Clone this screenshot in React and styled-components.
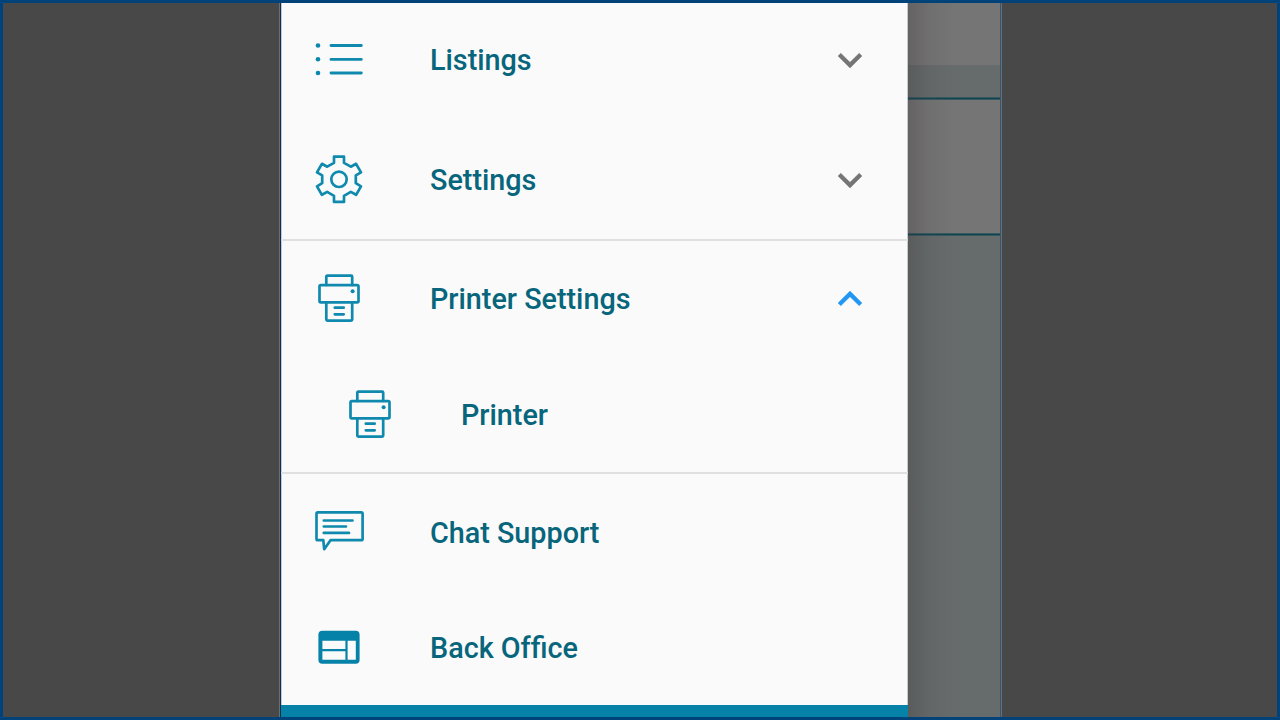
import React from "react";
import styled, { createGlobalStyle } from "styled-components";

const GlobalStyle = createGlobalStyle`
  * { box-sizing: border-box; }
  body { margin: 0; background: #484848; font-family: Roboto, "Liberation Sans", sans-serif; }
`;

const Frame = styled.div`
  display: flex;
  width: 1280px;
  height: 720px;
  border: 3px solid #00427a;
  background: #484848;
  overflow: hidden;
`;

const Screen = styled.main`
  display: flex;
  width: 723px;
  height: 714px;
  margin-left: 276px;
  border-left: 1px solid #6b6f72;
  border-right: 1px solid #6d6d6d;
`;

const ScreenEdge = styled.div`
  flex: none;
  width: 1px;
  background: ${(p) => p.$color};
`;

const Drawer = styled.nav`
  display: flex;
  flex-direction: column;
  flex: none;
  width: 627px;
  height: 714px;
  background: #fafafa;
  overflow: hidden;
`;

const Section = styled.div`
  flex: none;
  border: 0 solid #c3c9ce;
  border-width: 0 1px;
`;

const Divider = styled.div`
  flex: none;
  height: 2px;
  background: #e0e0e0;
`;

const Row = styled.div`
  display: flex;
  align-items: center;
  height: ${(p) => p.$height}px;
  padding: 0 33px 0 ${(p) => (p.$nested ? 64 : 33)}px;
  margin-top: ${(p) => p.$offset || 0}px;
`;

const Label = styled.span`
  flex: 1;
  margin-left: 67px;
  color: #07657c;
  font-size: 28.75px;
  font-weight: 500;
  line-height: 34px;
  white-space: nowrap;
`;

/* Keeps the first f out of the ffi ligature. */
const Unjoined = styled.span`
  display: inline-block;
`;

const LineIcon = styled.svg`
  flex: none;
  width: 48px;
  height: 48px;
  fill: none;
  stroke: #0f8aae;
  stroke-width: 2.7;
  stroke-linecap: round;
  stroke-linejoin: round;
  overflow: visible;
`;

const ChevronIcon = styled.svg`
  flex: none;
  width: 48px;
  height: 48px;
  fill: ${(p) => (p.$open ? "#2196f3" : "#757575")};
  stroke: ${(p) => (p.$open ? "#2196f3" : "#757575")};
  stroke-width: 0.2;
  stroke-linejoin: round;
  transform: ${(p) => (p.$open ? "rotate(180deg)" : "none")};
`;

const Footer = styled.div`
  flex: 1;
  background: #0682a8;
`;

const Backdrop = styled.div`
  display: flex;
  flex-direction: column;
  flex: 1;
  background: #666b6b;
  position: relative;

  &::after {
    content: "";
    position: absolute;
    inset: 0 auto 0 0;
    width: 46px;
    background: linear-gradient(to right, rgba(60, 56, 54, 0.3), rgba(80, 70, 74, 0.13) 45%, rgba(100, 100, 100, 0));
  }
`;

const Panel = styled.div`
  height: ${(p) => p.$height}px;
  background: ${(p) => (p.$gap ? "#666b6b" : "#757575")};
`;

const Rule = styled.div`
  height: 3px;
  background: linear-gradient(#365960 0 33.3%, #0f4350 33.3% 66.6%, #365960 66.6%);
`;

const ListIcon = () => (
  <LineIcon viewBox="0 0 48 48">
    <g fill="#0a87ac" stroke="none">
      <circle cx="3" cy="9.5" r="2.3" />
      <circle cx="3" cy="23.3" r="2.3" />
      <circle cx="3" cy="37" r="2.3" />
    </g>
    <path strokeWidth="2.9" d="M16 9.5h30.3M16 23.4h30.3M16 37h30.3" />
  </LineIcon>
);

const GearIcon = () => (
  <LineIcon viewBox="-24 -23.3 48 48">
    <path d="M-5-16.5V-22.6H5V-16.5L11.8-12.6L17.1-15.5L22-7L16.8-3.9V3.9L22 7L17.1 15.5L11.8 12.6L5 16.5V22.6H-5V16.5L-11.8 12.6L-17.1 15.5L-22 7L-16.8 3.9V-3.9L-22-7L-17.1-15.5L-11.8-12.6Z" />
    <circle r="7.7" />
  </LineIcon>
);

const PrinterIcon = () => (
  <LineIcon viewBox="0 0.1 48 48">
    <rect x="4.5" y="10.2" width="39" height="17.2" rx="1.3" />
    <path d="M11.3 10V1.9Q11.3.8 12.4.8H36.1Q37.2.8 37.2 1.9V10M11.3 27.6V44.7Q11.3 45.8 12.4 45.8H36.1Q37.2 45.8 37.2 44.7V27.6M19.8 32.8h8.9M19.8 39.4h8.9" />
    <circle cx="37.6" cy="16.4" r="2" fill="#0a87ac" stroke="none" />
  </LineIcon>
);

const ChatIcon = () => (
  <LineIcon viewBox="0 0.3 48 48">
    <path d="M2.8 3.7H46.3Q47.6 3.7 47.6 5V30.3Q47.6 31.5 46.3 31.5H15.5L9.2 40.5L8.3 31.5H2.8Q1.5 31.5 1.5 30.3V5Q1.5 3.7 2.8 3.7ZM8.8 11.8H37.5M8.8 17.8H31M8.8 24.2H34" />
  </LineIcon>
);

const WebIcon = () => (
  <LineIcon viewBox="0 -0.2 48 48">
    <path
      fill="#0682a8"
      stroke="none"
      fillRule="evenodd"
      d="M7.3 6.5H40.7Q44.6 6.5 44.6 10.4V35.6Q44.6 39.5 40.7 39.5H7.3Q3.4 39.5 3.4 35.6V10.4Q3.4 6.5 7.3 6.5ZM7.4 16.6V24.7H30.4V16.6ZM7.4 27V35.5H30.4V27ZM32.6 16.6V35.5H40.8V16.6Z"
    />
  </LineIcon>
);

const Chevron = ({ open }) => (
  <ChevronIcon viewBox="0 0 24 24" $open={open}>
    <path d="M16.59 8.59 12 13.17 7.41 8.59 6 10l6 6 6-6z" />
  </ChevronIcon>
);

const MenuRow = ({ icon, label, children, ...layout }) => (
  <Row {...layout}>
    {icon}
    <Label>{label}</Label>
    {children}
  </Row>
);

export default function App() {
  return (
    <>
      <GlobalStyle />
      <Frame>
        <Screen>
          <ScreenEdge $color="#0c3153" />
          <Drawer>
            <Section>
              <MenuRow icon={<ListIcon />} label="Listings" $height={120} $offset={-3}>
                <Chevron />
              </MenuRow>
              <MenuRow icon={<GearIcon />} label="Settings" $height={119}>
                <Chevron />
              </MenuRow>
            </Section>
            <Divider />
            <Section>
              <MenuRow icon={<PrinterIcon />} label="Printer Settings" $height={116}>
                <Chevron open />
              </MenuRow>
              <MenuRow icon={<PrinterIcon />} label="Printer" $height={115} $nested />
            </Section>
            <Divider />
            <Section>
              <MenuRow icon={<ChatIcon />} label="Chat Support" $height={117} />
              <MenuRow
                icon={<WebIcon />}
                label={<><Unjoined>Back Of</Unjoined>fice</>}
                $height={114}
              />
            </Section>
            <Footer />
          </Drawer>
          <Backdrop>
            <Panel $height={62} />
            <Panel $height={32} $gap />
            <Rule />
            <Panel $height={133} />
            <Rule />
          </Backdrop>
          <ScreenEdge $color="#2b597d" />
        </Screen>
      </Frame>
    </>
  );
}
